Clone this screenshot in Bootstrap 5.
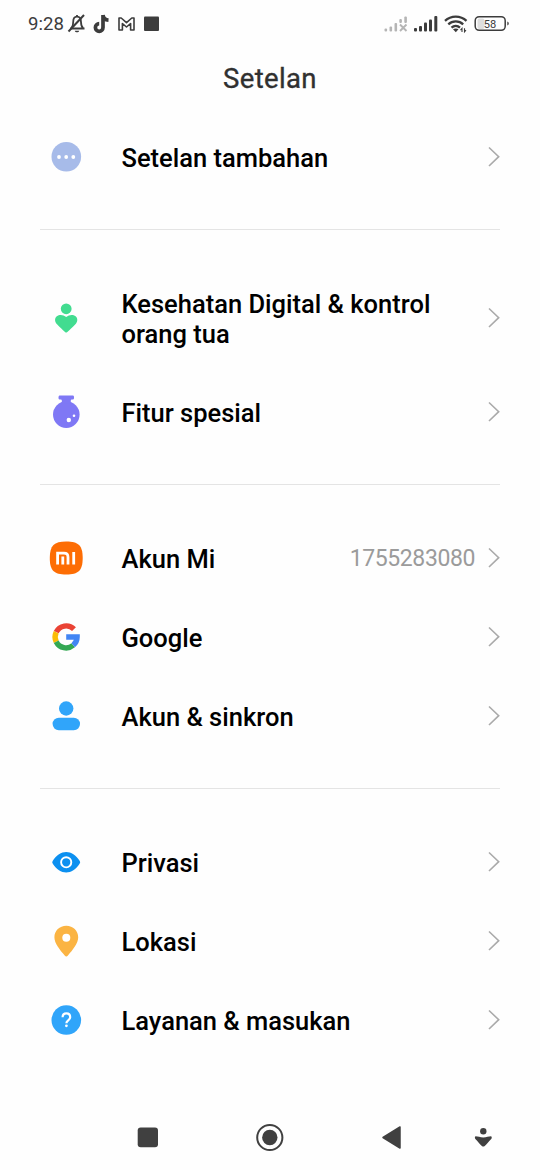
<!DOCTYPE html>
<html lang="id">
<head>
<meta charset="utf-8">
<meta name="viewport" content="width=device-width, initial-scale=1">
<title>Setelan</title>
<link href="https://cdn.jsdelivr.net/npm/bootstrap@5.3.0/dist/css/bootstrap.min.css" rel="stylesheet">
<style>
  body { font-family: Roboto, "Noto Sans", sans-serif; color: #000; background: #fefefe; }
  .screen { width: 540px; height: 1170px; }
  .status-bar { height: 47px; padding: 0 28px 0 28px; color: #3c3c3c; }
  .clock { font-size: 18.6px; line-height: 45px; padding-top: 2px; width: 39px; }
  .app-title { height: 70px; padding-top: 14px; font-size: 27.5px; line-height: 36px; letter-spacing: .35px; color: #303030; -webkit-text-stroke: .35px #303030; }
  .settings-group { padding: 0 40px; }
  .settings-group + .settings-group::before { content: ""; display: block; height: 1px; background: #e4e4e4; margin: 33px 0; }
  .setting { height: 79px; padding: 0 0 0 9px; color: #000; text-decoration: none; }
  .setting.two-line { height: 109px; }
  .setting-label { margin-left: 38.5px; font-size: 25.5px; font-weight: 500; line-height: 30px; padding-top: 3px; }
  .setting-value { font-size: 23px; color: #9b9b9b; margin-right: 12px; padding-top: 3px; letter-spacing: -.4px; }
  .setting .chevron { margin-right: -1px; }
  .nav-keys { height: 66px; color: #404040; }
  svg { display: block; flex: none; }
</style>
</head>
<body>
<div class="screen d-flex flex-column overflow-hidden">
  <header>
    <div class="status-bar d-flex align-items-center justify-content-between">
      <div class="d-flex align-items-center">
        <span class="clock">9:28</span>
        <svg width="94" height="24" viewBox="67 12 94 24" fill="none" stroke="currentColor">
          <path d="M70 28.500h14.500M71.500 28c1.500-1.500 1.700-3 1.700-6 0-3.500 1.600-5.300 3.800-5.300s4 1.800 4 5.300c0 3 .3 4.500 2 6M77 16.500v-1.500" stroke-width="1.800"/>
          <path d="M68.500 31.500L84 15" stroke-width="2"/>
          <path d="M74.800 30.800h4.400c-.4 2-4 2-4.400 0z" fill="currentColor" stroke="none"/>
          <path d="M103 15v12.500a3.800 3.800 0 1 1-3.800-3.800M103 15c.3 3 2.300 5 5.500 5.200" stroke-width="3.700"/>
          <path d="M119 30V18h2.200l5.300 4.600 5.300-4.600h2.200v12h-3.400v-6.500l-4.100 3.500-4.100-3.500V30z" stroke-width="1.600" stroke-linejoin="round"/>
          <rect x="144" y="16.500" width="15" height="14.500" rx="1" fill="currentColor" stroke="none"/>
        </svg>
      </div>
      <svg width="128" height="24" viewBox="384 12 128 24" fill="currentColor">
        <g fill="#b5b5b5"><rect x="384.500" y="28.500" width="2.600" height="3" rx="1"/><rect x="389.500" y="26.500" width="2.600" height="5" rx="1"/><rect x="394.500" y="23" width="2.600" height="8.500" rx="1"/><rect x="399.300" y="19" width="2.600" height="4" rx="1"/><rect x="404.300" y="16.500" width="2.600" height="6.500" rx="1"/><path d="M400 24.500l6.500 6.500M406.500 24.500l-6.500 6.500" stroke="#b5b5b5" stroke-width="1.900"/></g>
        <rect x="414" y="28" width="3" height="3.500" rx="1"/><rect x="419" y="26" width="3" height="5.500" rx="1"/><rect x="424" y="22.500" width="3" height="9" rx="1"/><rect x="429" y="19.500" width="3" height="12" rx="1"/><rect x="434.300" y="16" width="3" height="15.500" rx="1"/>
        <g fill="none" stroke="currentColor" stroke-width="2.300"><path d="M445 20.800c6-5.600 15.500-5.600 21.500 0M448.300 24.300c4.200-3.800 10.700-3.800 14.900 0M451.500 27.600c2.500-2.200 6-2.200 8.500 0"/></g>
        <path d="M453 29.300c1.500-1.100 4.200-1.100 5.500 0l-2.700 3z"/>
        <path d="M462 32v-3.500l-1.500 1.700M464.500 28.300v3.500l1.500-1.700" fill="none" stroke="currentColor" stroke-width="1.100"/>
        <rect x="477.500" y="18.500" width="7" height="10.500" rx="2" fill="#dedede"/>
        <rect x="475.200" y="16.700" width="30" height="13.600" rx="4" fill="none" stroke="currentColor" stroke-width="1.500"/>
        <path d="M507.300 21.500c2 .7 2 3.300 0 4z"/>
        <text x="490" y="27.600" text-anchor="middle" font-size="11.500" textLength="12.500" lengthAdjust="spacingAndGlyphs">58</text>
      </svg>
    </div>
    <h1 class="app-title text-center fw-normal mb-0">Setelan</h1>
  </header>

  <svg class="d-none"><symbol id="chevron" viewBox="0 0 14 22"><path d="M2 1.500l9.700 9.200L2 20" fill="none" stroke="#aaa" stroke-width="1.600"/></symbol></svg>

  <main class="flex-grow-1">
    <section class="settings-group">
      <a class="setting d-flex align-items-center">
        <svg width="34" height="34" viewBox="0 0 34 34"><circle cx="17.300" cy="16.800" r="14.800" fill="#a7bbe9"/><g fill="#fff"><circle cx="10" cy="17" r="1.900"/><circle cx="17.200" cy="17" r="1.900"/><circle cx="24.300" cy="17" r="1.900"/></g></svg>
        <span class="setting-label flex-grow-1">Setelan tambahan</span>
        <svg class="chevron" width="14" height="22"><use href="#chevron"/></svg>
      </a>
    </section>

    <section class="settings-group">
      <a class="setting two-line d-flex align-items-center">
        <svg width="34" height="34" viewBox="0 0 34 34" fill="#42dc90"><circle cx="17.200" cy="7.800" r="5.400"/><path d="M17.200 31.500c-1 0-2-.9-9.200-8.200-2.700-2.800-2.300-6.300-.2-8 2.700-2.200 6.500-1.600 9.400.6 2.900-2.200 6.700-2.800 9.400-.6 2.100 1.700 2.500 5.200-.2 8-7.200 7.300-8.200 8.200-9.200 8.200z"/></svg>
        <span class="setting-label flex-grow-1">Kesehatan Digital &amp; kontrol<br>orang tua</span>
        <svg class="chevron" width="14" height="22"><use href="#chevron"/></svg>
      </a>
      <a class="setting d-flex align-items-center">
        <svg width="34" height="34" viewBox="0 0 34 34"><circle cx="17.300" cy="19.600" r="13.300" fill="#7f78f5"/><path d="M10.500.6h13.600c1.300 0 1.300 4 0 4h-1.600c-1 0-1 3 0 4H12.100c1-1 1-4 0-4h-1.600c-1.300 0-1.300-4 0-4z" fill="#7f78f5"/><circle cx="19.800" cy="25" r="2.200" fill="#fff"/><circle cx="25" cy="20.700" r="1.300" fill="#fff"/></svg>
        <span class="setting-label flex-grow-1">Fitur spesial</span>
        <svg class="chevron" width="14" height="22"><use href="#chevron"/></svg>
      </a>
    </section>

    <section class="settings-group">
      <a class="setting d-flex align-items-center">
        <svg width="34" height="34" viewBox="0 0 34 34"><path d="M17.200.5C29.500.5 33.700 4.500 33.700 17S29.500 33.500 17.200 33.500.8 29.500.8 17 5 .5 17.200.5z" fill="#fd6d04"/><path d="M8.600 23.500V12.200h6.400c2.700 0 4 1.200 4 3.800v7.500M13.800 15.500v8M24.700 11v12.500" fill="none" stroke="#fff" stroke-width="2.800"/></svg>
        <span class="setting-label flex-grow-1">Akun Mi</span>
        <span class="setting-value">1755283080</span>
        <svg class="chevron" width="14" height="22"><use href="#chevron"/></svg>
      </a>
      <a class="setting d-flex align-items-center">
        <svg width="34" height="34" viewBox="0 0 34 34" fill="none" stroke-width="5.400"><path d="M7.200 12.200A11 11 0 0 1 25 9.200" stroke="#ea4335"/><path d="M7.200 21.800a11 11 0 0 1 0-9.600" stroke="#fbbc05"/><path d="M24.200 25.300A11 11 0 0 1 7.200 21.800" stroke="#34a853"/><path d="M17.200 17h10.900a11 11 0 0 1-3.900 8.300" stroke="#4285f4"/></svg>
        <span class="setting-label flex-grow-1">Google</span>
        <svg class="chevron" width="14" height="22"><use href="#chevron"/></svg>
      </a>
      <a class="setting d-flex align-items-center">
        <svg width="34" height="34" viewBox="0 0 34 34" fill="#30a5fa"><circle cx="17.200" cy="9.500" r="7.200"/><rect x="3.600" y="18.800" width="27.400" height="12.400" rx="6.200"/></svg>
        <span class="setting-label flex-grow-1">Akun &amp; sinkron</span>
        <svg class="chevron" width="14" height="22"><use href="#chevron"/></svg>
      </a>
    </section>

    <section class="settings-group">
      <a class="setting d-flex align-items-center">
        <svg width="34" height="34" viewBox="0 0 34 34"><path d="M3.800 18.800Q2.600 17.300 3.800 15.800C11 4.200 23.400 4.200 30.600 15.800Q31.800 17.300 30.600 18.800C23.400 30.400 11 30.400 3.800 18.800z" fill="#0c90f0"/><circle cx="17.200" cy="17.300" r="5.100" fill="none" stroke="#fff" stroke-width="1.900"/></svg>
        <span class="setting-label flex-grow-1">Privasi</span>
        <svg class="chevron" width="14" height="22"><use href="#chevron"/></svg>
      </a>
      <a class="setting d-flex align-items-center">
        <svg width="34" height="34" viewBox="0 0 34 34"><path d="M17.300 1.800c-6.800 0-11.900 5-11.900 11.400 0 6.300 5.500 12.500 10.300 18.300 1 1.200 2.200 1.200 3.200 0 4.800-5.800 10.300-12 10.300-18.300 0-6.400-5.100-11.400-11.900-11.400z" fill="#fbb443"/><circle cx="17.300" cy="13.800" r="4" fill="#fff"/></svg>
        <span class="setting-label flex-grow-1">Lokasi</span>
        <svg class="chevron" width="14" height="22"><use href="#chevron"/></svg>
      </a>
      <a class="setting d-flex align-items-center">
        <svg width="34" height="34" viewBox="0 0 34 34"><circle cx="17.300" cy="17" r="14.800" fill="#30a5fa"/><path d="M13.600 14.300c0-5.300 7.600-5.300 7.600 0 0 3-3.800 3.200-3.800 6" fill="none" stroke="#fff" stroke-width="2.200"/><circle cx="17.400" cy="22.800" r="1.400" fill="#fff"/></svg>
        <span class="setting-label flex-grow-1">Layanan &amp; masukan</span>
        <svg class="chevron" width="14" height="22"><use href="#chevron"/></svg>
      </a>
    </section>
  </main>

  <nav class="nav-keys d-flex align-items-center" aria-label="Navigasi">
    <svg width="540" height="66" viewBox="0 1104 540 66" fill="currentColor">
      <rect x="137.700" y="1127.500" width="20.300" height="19.800" rx="3"/>
      <circle cx="269.800" cy="1137.500" r="12.600" fill="none" stroke="currentColor" stroke-width="2"/><circle cx="269.800" cy="1137.500" r="7.700"/>
      <path d="M383 1137.500l17-10.500v21z" stroke="currentColor" stroke-width="1.500" stroke-linejoin="round"/>
      <circle cx="483.300" cy="1131.300" r="3.200"/>
      <path d="M475.600 1136.200c2.500 0 4.300 1.200 7.700 1.200s5.200-1.200 7.700-1.200c1 .3 1 2 0 3-2.200 2.400-4.700 5.300-6.300 6.800-.9.800-1.900.8-2.800 0-1.600-1.500-4.100-4.400-6.300-6.800-1-1-1-2.700 0-3z"/>
    </svg>
  </nav>
</div>
<script src="https://cdn.jsdelivr.net/npm/bootstrap@5.3.0/dist/js/bootstrap.bundle.min.js"></script>
</body>
</html>
